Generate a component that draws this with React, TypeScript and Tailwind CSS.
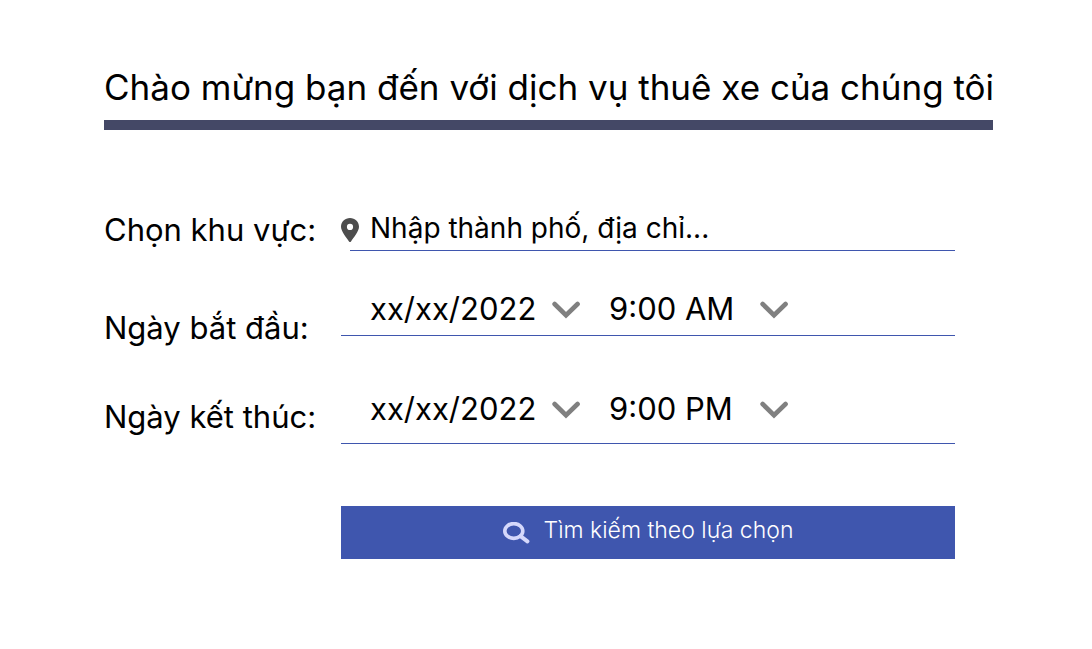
import React from 'react';

const dates = ['xx/xx/2022'];
const times = ['9:00 AM', '9:00 PM'];

function Chevron() {
  return (
    <svg
      className="pointer-events-none -ml-7 h-5 w-7 shrink-0"
      viewBox="0 0 28 20"
      fill="none"
      stroke="#808080"
      strokeWidth="4.6"
      strokeLinecap="round"
      aria-hidden="true"
    >
      <path d="M2.6 5 L14 16.2 L25.6 5" strokeLinejoin="miter" />
    </svg>
  );
}

type DateTimeRowProps = {
  id: string;
  label: string;
  time: string;
  labelClass: string;
  fieldClass: string;
};

function DateTimeRow({ id, label, time, labelClass, fieldClass }: DateTimeRowProps) {
  return (
    <div className="grid grid-cols-[237px_1fr]">
      <label htmlFor={id} className={`text-[31px] leading-10 ${labelClass}`}>
        {label}
      </label>
      <div className={`flex items-start gap-[29px] border-b border-[#3f56ae] pl-[29px] ${fieldClass}`}>
        <div className="flex w-[210px] items-center">
          <select
            id={id}
            className="w-full appearance-none bg-transparent text-[31px] leading-10 outline-none"
          >
            {dates.map((d) => (
              <option key={d}>{d}</option>
            ))}
          </select>
          <Chevron />
        </div>
        <div className="flex w-[179px] items-center">
          <select
            aria-label={`${label} giờ`}
            defaultValue={time}
            className="w-full appearance-none bg-transparent text-[31px] leading-10 outline-none"
          >
            {times.map((t) => (
              <option key={t}>{t}</option>
            ))}
          </select>
          <Chevron />
        </div>
      </div>
    </div>
  );
}

export default function App() {
  return (
    <main className="min-h-screen bg-white pt-[63px] pr-[99px] pb-20 pl-[104px] font-['Inter',sans-serif] text-black">
      <h1 className="border-b-10 border-[#444866] pb-[9px] text-[35px] leading-12 whitespace-nowrap">
        Chào mừng bạn đến với dịch vụ thuê xe của chúng tôi
      </h1>

      <form className="pt-20 pr-[38px]" onSubmit={(e) => e.preventDefault()}>
        <div className="grid grid-cols-[237px_1fr]">
          <label htmlFor="area" className="text-[31px] leading-10">
            Chọn khu vực:
          </label>
          <div className="ml-[9px] flex items-center border-b border-[#3f56ae]">
            <svg className="-ml-[9px] h-6 w-[18px] shrink-0" viewBox="0 0 18 24" aria-hidden="true">
              <path
                fill="#4d4d4d"
                fillRule="evenodd"
                d="M9 0C4 0 0 3.9 0 8.8C0 13.2 5.2 19.4 8 23.4Q9 24.6 10 23.4C12.8 19.4 18 13.2 18 8.8C18 3.9 14 0 9 0ZM9 5.8A3.1 3.1 0 1 1 9 12A3.1 3.1 0 1 1 9 5.8Z"
              />
            </svg>
            <input
              id="area"
              type="text"
              placeholder="Nhập thành phố, địa chỉ..."
              className="ml-[11px] w-full bg-transparent pb-1 text-[28px] leading-9 outline-none placeholder:text-black"
            />
          </div>
        </div>

        <DateTimeRow
          id="start"
          label="Ngày bắt đầu:"
          time="9:00 AM"
          labelClass="-mb-3 pt-[57px]"
          fieldClass="pt-[38px] pb-1.5"
        />
        <DateTimeRow
          id="end"
          label="Ngày kết thúc:"
          time="9:00 PM"
          labelClass="pt-[61px]"
          fieldClass="pt-[53px] pb-3.5"
        />

        <button
          type="submit"
          className="mt-[62px] ml-[237px] flex h-[53px] w-[calc(100%-237px)] items-center justify-center gap-3.5 bg-[#3f56ae] pb-1 text-[23px] font-light text-white"
        >
          <svg
            className="mt-1 h-[22px] w-[27px]"
            viewBox="0 0 27 22"
            fill="none"
            stroke="#d5d8fb"
            aria-hidden="true"
          >
            <ellipse cx="10.8" cy="9" rx="9" ry="7.4" strokeWidth="3.6" />
            <path d="M17.5 14.2 L24.4 19.4" strokeWidth="4" strokeLinecap="round" />
          </svg>
          Tìm kiếm theo lựa chọn
        </button>
      </form>
    </main>
  );
}
